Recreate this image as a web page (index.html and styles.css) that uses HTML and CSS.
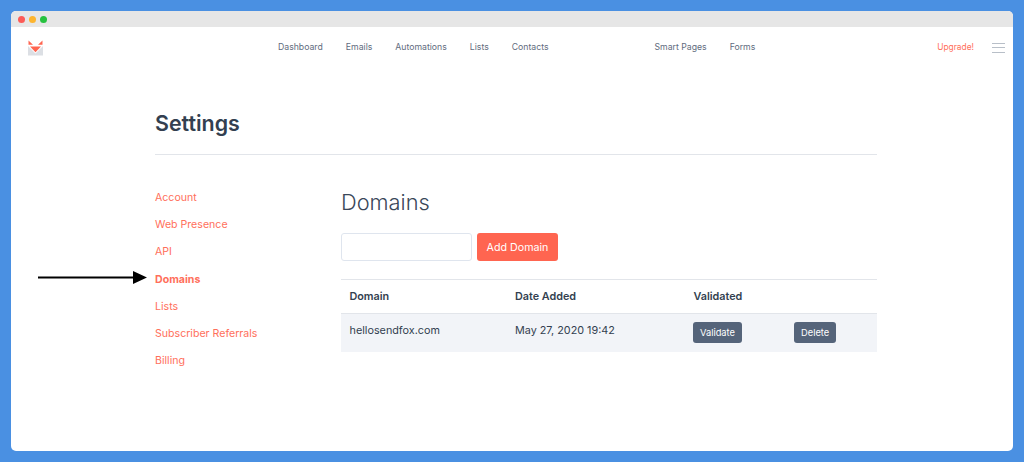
FILE: index.html
```html
<!DOCTYPE html>
<html lang="en">
<head>
<meta charset="utf-8">
<title>Settings</title>
<link rel="stylesheet" href="styles.css">
</head>
<body>
<div class="window">
  <div class="titlebar">
    <span class="dot dot-red"></span><span class="dot dot-yellow"></span><span class="dot dot-green"></span>
  </div>
  <header class="nav">
    <svg class="logo" width="15" height="16" viewBox="0 0 15 16">
      <path d="M0 5.5H15V15.5H0Z" fill="#dcdfe4"/>
      <path d="M0 5H15V6L7.5 13.6 0 6Z" fill="#fff"/>
      <path d="M2 6.5H13L7.5 12.3Z" fill="#ff6550"/>
      <path d="M0.5 0.5 5 4.8H0.5ZM14.5 0.5 10 4.8H14.5Z" fill="#ff6550"/>
    </svg>
    <nav class="links links-main">
      <a>Dashboard</a><a>Emails</a><a>Automations</a><a>Lists</a><a>Contacts</a>
    </nav>
    <nav class="links links-side">
      <a>Smart Pages</a><a>Forms</a>
    </nav>
    <a class="upgrade">Upgrade!</a>
    <div class="burger"><i></i><i></i><i></i></div>
  </header>
  <main class="content">
    <h1 class="title">Settings</h1>
    <div class="columns">
      <aside class="menu">
        <a>Account</a>
        <a>Web Presence</a>
        <a>API</a>
        <a class="active">Domains</a>
        <a>Lists</a>
        <a>Subscriber Referrals</a>
        <a>Billing</a>
      </aside>
      <section class="panel">
        <h2 class="heading">Domains</h2>
        <form class="add-form">
          <input class="field" type="text" aria-label="Domain">
          <button class="btn-add" type="button">Add Domain</button>
        </form>
        <table class="table">
          <thead>
            <tr><th class="c1">Domain</th><th class="c2">Date Added</th><th class="c3">Validated</th><th></th></tr>
          </thead>
          <tbody>
            <tr>
              <td class="cell-text">hellosendfox.com</td>
              <td class="cell-text">May 27, 2020 19:42</td>
              <td><button class="btn-small" type="button">Validate</button></td>
              <td><button class="btn-small" type="button">Delete</button></td>
            </tr>
          </tbody>
        </table>
      </section>
    </div>
  </main>
</div>
<svg class="arrow" width="110" height="16" viewBox="0 0 110 16">
  <path d="M0 6.4H95V1L109 7.5 95 14V8.6H0Z" fill="#000"/>
</svg>
</body>
</html>
```
FILE: styles.css
```css
* { box-sizing: border-box; }
html, body { margin: 0; height: 100%; }
body {
  background: #4a90e2;
  padding: 11px;
  font-family: Inter, "Liberation Sans", sans-serif;
  overflow: hidden;
  position: relative;
}
.window {
  width: 1002px;
  height: 440px;
  background: #fff;
  border-radius: 5px;
  overflow: hidden;
}
.titlebar {
  height: 16px;
  background: #e6e6e6;
  display: flex;
  align-items: center;
  gap: 4px;
  padding: 0 7px;
}
.dot { width: 7px; height: 7px; border-radius: 50%; }
.dot-red { background: #fc5b57; }
.dot-yellow { background: #fdb52f; }
.dot-green { background: #27c23f; }
.nav {
  height: 40px;
  display: flex;
  align-items: center;
  font-size: 8.7px;
  color: #5f6c7e;
  padding-left: 17px;
}
.logo { margin-top: 1px; flex: none; }
.links { display: flex; gap: 23px; }
.links-main { margin-left: 235px; }
.links-side { margin-left: 106px; }
.upgrade { margin-left: auto; color: #ff6f5b; margin-right: 18px; font-size: 8.4px; }
.burger { width: 13px; margin: 1px 8px 0 0; display: flex; flex-direction: column; gap: 3.5px; }
.burger i { display: block; height: 1px; background: #b8bfc8; }
.content { padding: 0 136px 0 144px; }
.title {
  margin: 42px 0 0;
  height: 46px;
  font-size: 21.4px;
  line-height: 28px;
  font-weight: 600;
  color: #333f50;
  border-bottom: 1px solid #e2e5ea;
}
.columns { display: flex; margin-top: 29px; }
.menu {
  width: 186px;
  flex: none;
  display: flex;
  flex-direction: column;
  font-size: 10.6px;
  color: #ff6f5b;
}
.menu a { height: 27.23px; line-height: 27.23px; }
.menu .active { font-weight: 700; }
.panel { flex: 1; }
.heading {
  margin: 3px 0 0;
  font-size: 21.8px;
  line-height: 30px;
  font-weight: 300;
  color: #3a4759;
}
.add-form { display: flex; gap: 5px; margin-top: 16px; }
.field {
  width: 131px;
  height: 28px;
  border: 1px solid #dfe5ee;
  border-radius: 3px;
  background: #fff;
}
.btn-add {
  width: 81px;
  height: 28px;
  border: 0;
  border-radius: 3px;
  background: #ff6550;
  color: #fff;
  font: 10.7px Inter, "Liberation Sans", sans-serif;
  padding: 0;
}
.table {
  margin-top: 18px;
  width: 100%;
  border-collapse: collapse;
  table-layout: fixed;
  font-size: 10.8px;
  color: #333f50;
}
.table th {
  height: 34px;
  text-align: left;
  font-weight: 600;
  padding: 0 0 0 8.5px;
  border-top: 1px solid #e2e5ea;
  border-bottom: 1px solid #e2e5ea;
}
.table td { height: 38px; padding: 0 0 0 8px; background: #f2f4f8; }
.table .cell-text { padding: 0 0 5px 8.5px; }
.c1 { width: 165.5px; }
.c2 { width: 178.5px; }
.c3 { width: 101px; }
.btn-small {
  border: 0;
  border-radius: 3px;
  background: #55647a;
  color: #fff;
  font: 9.3px Inter, "Liberation Sans", sans-serif;
  height: 21px;
  padding: 0 7px;
  display: block;
}
.arrow { position: absolute; left: 38px; top: 270px; }
```
